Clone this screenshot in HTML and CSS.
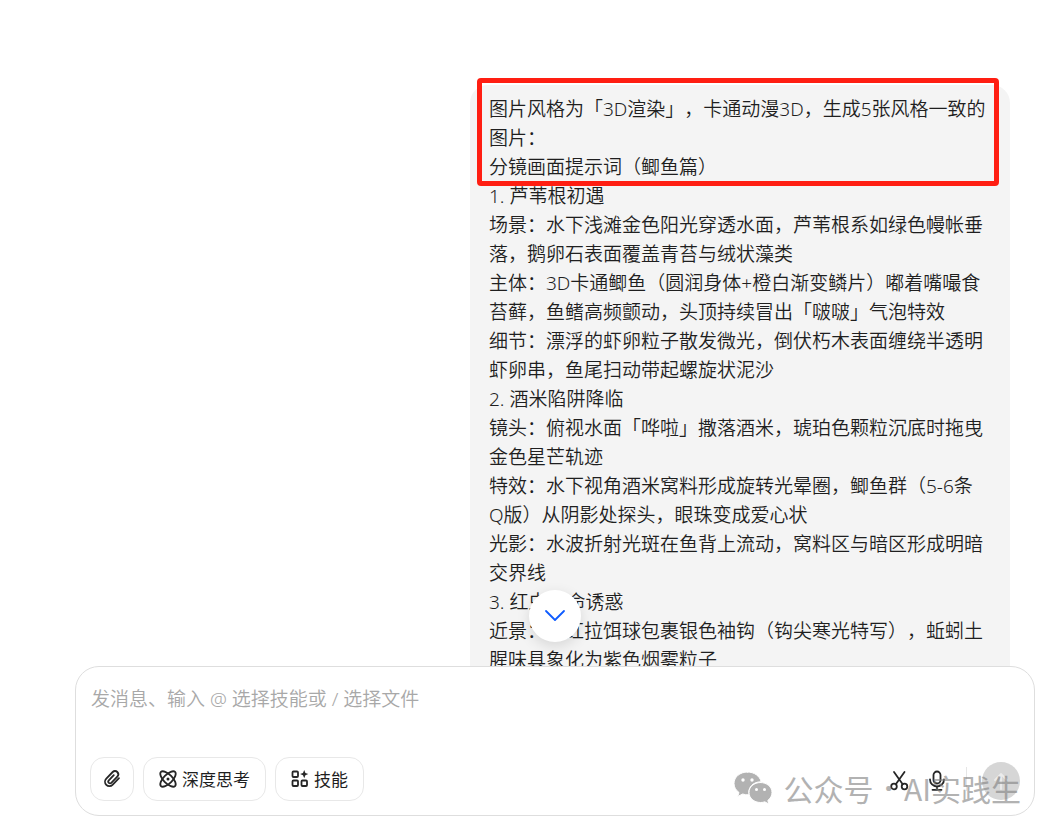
FILE: index.html
```
<!DOCTYPE html>
<html lang="zh-CN">
<head>
    <meta charset="UTF-8">
    <meta name="viewport" content="width=device-width, initial-scale=1.0">
    <title>对话</title>
    <link rel="stylesheet" href="styles.css">
</head>
<body>
    <div class="page">
        <!-- 消息列表 -->
        <main class="chat">
            <div class="message">
                <p>图片风格为「3D渲染」，卡通动漫3D，生成5张风格一致的<br>图片：</p>
                <p>分镜画面提示词（鲫鱼篇）</p>
                <p>1. 芦苇根初遇</p>
                <p>场景：水下浅滩金色阳光穿透水面，芦苇根系如绿色幔帐垂<br>落，鹅卵石表面覆盖青苔与绒状藻类</p>
                <p>主体：3D卡通鲫鱼（圆润身体+橙白渐变鳞片）嘟着嘴嘬食<br>苔藓，鱼鳍高频颤动，头顶持续冒出「啵啵」气泡特效</p>
                <p>细节：漂浮的虾卵粒子散发微光，倒伏朽木表面缠绕半透明<br>虾卵串，鱼尾扫动带起螺旋状泥沙</p>
                <p>2. 酒米陷阱降临</p>
                <p>镜头：俯视水面「哗啦」撒落酒米，琥珀色颗粒沉底时拖曳<br>金色星芒轨迹</p>
                <p>特效：水下视角酒米窝料形成旋转光晕圈，鲫鱼群（5-6条<br>Q版）从阴影处探头，眼珠变成爱心状</p>
                <p>光影：水波折射光斑在鱼背上流动，窝料区与暗区形成明暗<br>交界线</p>
                <p>3. 红虫致命诱惑</p>
                <p>近景：猩红拉饵球包裹银色袖钩（钩尖寒光特写），蚯蚓土<br>腥味具象化为紫色烟雾粒子</p>
                <div class="mark"></div>
            </div>
        </main>

        <!-- 输入区 -->
        <form class="composer">
            <button class="to-bottom" type="button" aria-label="回到底部">
                <svg width="20" height="12" viewBox="0 0 20 12"><path d="M1 1l9 9 9-9"/></svg>
            </button>
            <textarea class="input" rows="2" aria-label="发消息" placeholder="发消息、输入 @ 选择技能或 / 选择文件"></textarea>
            <div class="toolbar">
                <button class="tool tool-file" type="button" aria-label="上传文件">
                    <svg width="18" height="18" viewBox="0 0 18 18"><path d="M16 8.200l-6.500 6.600a4.300 4.300 0 0 1-6.200 0 4.400 4.400 0 0 1 0-6.200l6.400-6.600a3.200 3.200 0 0 1 4.600 0 3.300 3.300 0 0 1 0 4.600l-6 6.200a1.700 1.700 0 0 1-2.500-2.500l5-5.100"/></svg>
                </button>
                <button class="tool" type="button">
                    <svg width="18" height="18" viewBox="0 0 18 18">
                        <ellipse cx="9" cy="9" rx="10" ry="4.400" transform="rotate(45 9 9)"/>
                        <ellipse cx="9" cy="9" rx="10" ry="4.400" transform="rotate(-45 9 9)"/>
                        <circle class="solid" cx="9" cy="9" r="1.500"/>
                    </svg>
                    深度思考
                </button>
                <button class="tool" type="button">
                    <svg width="18" height="18" viewBox="0 0 18 18">
                        <rect x="1.500" y="1.500" width="5.500" height="5.500" rx="1"/>
                        <rect x="1.500" y="10.500" width="5.500" height="5.500" rx="1"/>
                        <rect x="10.500" y="10.500" width="5.500" height="5.500" rx="1"/>
                        <path class="solid" d="M13.200 0l1.200 2.900 2.900 1.200-2.900 1.200L13.200 8.200 12 5.300 9.100 4.100 12 2.900z"/>
                    </svg>
                    技能
                </button>
                <span class="space"></span>
                <button class="icon" type="button" aria-label="截图">
                    <svg width="20" height="22" viewBox="0 0 20 22">
                        <circle cx="4" cy="16.500" r="2.800"/>
                        <circle cx="14.500" cy="16.500" r="2.800"/>
                        <path d="M4 2l8.700 12.300M14.500 2L5.800 14.300"/>
                    </svg>
                </button>
                <button class="icon" type="button" aria-label="语音输入">
                    <svg width="20" height="22" viewBox="0 0 20 22">
                        <rect x="6.500" y="1.500" width="7" height="12" rx="3.500"/>
                        <path d="M3 9.500a7 7 0 0 0 14 0M10 17v2.500M5.500 19.800h9"/>
                    </svg>
                </button>
                <span class="line"></span>
                <button class="send" type="submit" aria-label="发送">
                    <svg width="20" height="20" viewBox="0 0 20 20"><path d="M10 18V4M4 9l6-6 6 6"/></svg>
                </button>
            </div>
            <div class="watermark">
                <svg width="40" height="34" viewBox="0 0 40 34">
                    <path d="M14.500 1C6.800 1 1 6 1 12.500c0 3.700 2 6.900 5 9l-1.300 4 5-2.500c2 .7 4 1 6.500.8-2-7 4-13.300 12-13C26.800 5 21.300 1 14.500 1z"/>
                    <path d="M27.500 11.500c-6.700 0-11.500 4.500-11.500 10s5 10 11.500 10c1.600 0 3-.2 4.300-.7l4 2.200-1-3.600c2.600-1.900 4.200-4.700 4.200-7.900 0-5.500-5-10-11.500-10z"/>
                    <g class="eye"><circle cx="10" cy="9" r="1.700"/><circle cx="19" cy="9" r="1.700"/><circle cx="23.500" cy="18.500" r="1.500"/><circle cx="31.500" cy="18.500" r="1.500"/></g>
                </svg>
                <span>公众号</span>
                <span class="dot">·</span>
                <span>AI实践生</span>
            </div>
        </form>
    </div>
</body>
</html>
```
FILE: styles.css
```
*{
    margin: 0;
    padding: 0;
    box-sizing: border-box;
}
body{
    background-color: #fff;
    color: #1f1f1f;
    font-family: "Noto Sans", "Noto Sans CJK SC", sans-serif;
    font-size: 19px;
    line-height: 29px;
    text-spacing-trim: space-all;
}
button,
textarea{
    font: inherit;
    color: inherit;
    border: none;
    background: none;
}
svg{
    display: block;
    flex: none;
    overflow: visible;
    fill: none;
    stroke: #262626;
    stroke-width: 1.8;
    stroke-linecap: round;
    stroke-linejoin: round;
}
.page{
    height: 100vh;
    display: flex;
    flex-direction: column;
    padding: 0 19px 16px 75px;
}
.chat{
    flex: 1;
    min-height: 0;
    overflow: hidden;
    display: flex;
    justify-content: flex-end;
    align-items: flex-start;
    padding: 85px 25px 0 0;
}
.message{
    position: relative;
    max-width: 540px;
    width: 100%;
    padding: 10px 19px;
    border-radius: 18px;
    background-color: #f4f4f4;
    font-weight: 350;
}
/* 标注框 */
.mark{
    position: absolute;
    top: -7px;
    left: 7px;
    right: 11px;
    height: 108px;
    border: 5px solid #ff1e12;
    border-radius: 4px;
}
.composer{
    position: relative;
    display: flex;
    flex-direction: column;
    border: 1px solid #dedede;
    border-radius: 24px;
    background-color: #fff;
    padding: 18px 14px 14px;
}
.to-bottom{
    position: absolute;
    left: 50%;
    top: -77px;
    width: 52px;
    height: 52px;
    margin-left: -26px;
    display: flex;
    justify-content: center;
    align-items: center;
    border-radius: 50%;
    background-color: #fff;
    box-shadow: 0 4px 14px rgba(0, 0, 0, 0.12);
}
.to-bottom svg{
    stroke: #0f5cff;
}
.input{
    height: 72px;
    padding: 0 1px;
    resize: none;
    outline: none;
    font-weight: 350;
}
.input::placeholder{
    color: #a8a8a8;
    opacity: 1;
}
.toolbar{
    display: flex;
    align-items: center;
    gap: 9px;
}
.tool{
    height: 44px;
    display: flex;
    align-items: center;
    gap: 5px;
    padding: 0 15px;
    border: 1px solid #e8e8e8;
    border-radius: 14px;
    font-size: 17px;
}
.tool-file{
    padding: 0 12px;
}
.space{
    flex: 1;
}
.icon{
    width: 28px;
    padding-top: 4px;
    display: flex;
    justify-content: center;
}
.line{
    width: 1px;
    height: 24px;
    margin: 0 6px;
    background-color: #e6e6e6;
}
.send{
    width: 38px;
    height: 38px;
    margin-top: 4px;
    display: flex;
    justify-content: center;
    align-items: center;
    border-radius: 50%;
    background-color: #d6d6d6;
}
.send svg{
    stroke: #ececec;
}
/* 水印 */
.watermark{
    position: absolute;
    right: 13px;
    bottom: 9px;
    display: flex;
    align-items: center;
    gap: 11px;
    color: #808080;
    font-family: "Noto Sans CJK SC", sans-serif;
    font-size: 30px;
    line-height: 36px;
    white-space: nowrap;
    opacity: 0.6;
    pointer-events: none;
}
.watermark svg{
    fill: #808080;
    stroke: #fff;
    stroke-width: 1;
}
.watermark .eye{
    fill: #fff;
    stroke: none;
}
.dot{
    font-family: "Noto Sans", sans-serif;
    font-weight: 700;
}
.solid{
    fill: #262626;
    stroke: none;
}
```
